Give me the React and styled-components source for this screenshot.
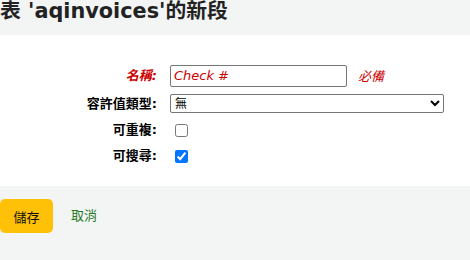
import React, { useState } from 'react';
import styled, { createGlobalStyle } from 'styled-components';

const GlobalStyle = createGlobalStyle`
  html, body {
    margin: 0;
    padding: 0;
    background: #fff;
  }
  body {
    font-family: "DejaVu Sans", "Noto Sans CJK TC", sans-serif;
    font-size: 13px;
    color: #000;
  }
`;

const Page = styled.div`
  width: 470px;
  height: 260px;
  overflow: hidden;
  display: flex;
  flex-direction: column;
`;

const Header = styled.header`
  height: 35px;
  background: #f3f4f4;
  flex: none;
`;

const Title = styled.h1`
  margin: 0;
  font-size: 20.8px;
  line-height: 23px;
  font-weight: bold;
  color: #222;
`;

const Fields = styled.div`
  display: grid;
  grid-template-columns: 157px 1fr;
  column-gap: 13px;
  align-items: center;
  padding: 26px 0 17px;
  flex: none;
`;

const Label = styled.label`
  text-align: right;
  font-weight: bold;
  color: ${(p) => (p.$required ? '#cc0000' : '#000')};
  font-style: ${(p) => (p.$required ? 'italic' : 'normal')};
  height: ${(p) => p.$h}px;
  line-height: ${(p) => p.$h}px;
`;

const Cell = styled.div`
  display: flex;
  align-items: center;
  height: ${(p) => p.$h}px;
`;

const TextInput = styled.input`
  box-sizing: border-box;
  width: 177px;
  height: 22px;
  padding: 0 3px;
  border: 1px solid #767676;
  border-radius: 2px;
  font-family: inherit;
  font-size: 13px;
  font-style: italic;
  color: #cc0000;
  outline: none;
`;

const Required = styled.span`
  margin-left: 11px;
  color: #cc0000;
  font-style: italic;
`;

const Select = styled.select`
  box-sizing: border-box;
  width: 274px;
  height: 19px;
  font-family: inherit;
  font-size: 12px;
  border: 1px solid #767676;
  border-radius: 2px;
  background: #fff;
  color: #000;
`;

const Check = styled.input`
  margin: 0 0 0 5px;
  width: 13px;
  height: 13px;
`;

const Footer = styled.footer`
  flex: 1;
  background: #f3f4f4;
  display: flex;
  align-items: flex-start;
  gap: 18px;
  padding-top: 13px;
`;

const SaveButton = styled.button`
  box-sizing: border-box;
  width: 53px;
  height: 34px;
  background: #ffc107;
  border: none;
  border-radius: 5px;
  font-family: inherit;
  font-size: 13px;
  color: #111;
  cursor: pointer;
`;

const CancelLink = styled.a`
  line-height: 34px;
  color: #267a26;
  text-decoration: none;
`;

export default function App() {
  const [name, setName] = useState('Check #');
  const [type, setType] = useState('none');
  const [repeatable, setRepeatable] = useState(false);
  const [searchable, setSearchable] = useState(true);

  return (
    <Page>
      <GlobalStyle />
      <Header>
        <Title>表 'aqinvoices'的新段</Title>
      </Header>
      <Fields>
        <Label $required $h={29} htmlFor="name">名稱:</Label>
        <Cell $h={29}>
          <TextInput id="name" value={name} onChange={(e) => setName(e.target.value)} />
          <Required>必備</Required>
        </Cell>
        <Label $h={27} htmlFor="av">容許值類型:</Label>
        <Cell $h={27}>
          <Select id="av" value={type} onChange={(e) => setType(e.target.value)}>
            <option value="none">無</option>
          </Select>
        </Cell>
        <Label $h={26} htmlFor="rep">可重複:</Label>
        <Cell $h={26}>
          <Check id="rep" type="checkbox" checked={repeatable} onChange={(e) => setRepeatable(e.target.checked)} />
        </Cell>
        <Label $h={26} htmlFor="search">可搜尋:</Label>
        <Cell $h={26}>
          <Check id="search" type="checkbox" checked={searchable} onChange={(e) => setSearchable(e.target.checked)} />
        </Cell>
      </Fields>
      <Footer>
        <SaveButton type="submit">儲存</SaveButton>
        <CancelLink href="#">取消</CancelLink>
      </Footer>
    </Page>
  );
}
